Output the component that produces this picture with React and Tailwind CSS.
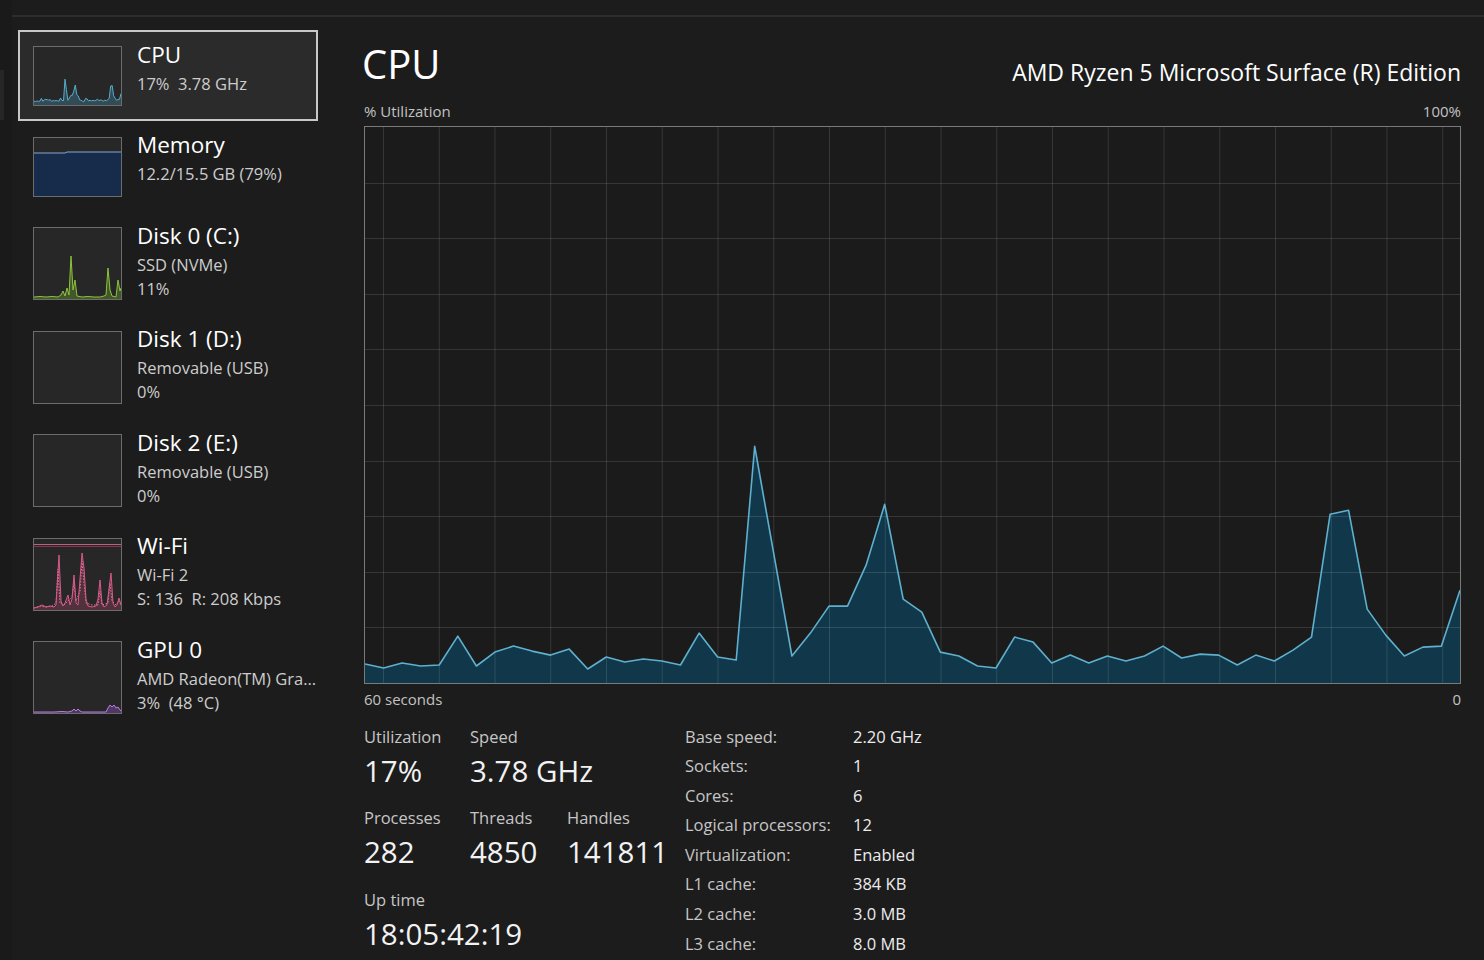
import React from "react";

const Y = [665, 669, 664, 667, 666, 637, 667, 653, 647, 652, 656, 650, 670, 658, 663, 660, 662, 666, 634, 658, 661, 447, 552, 657, 634, 607, 607, 566, 505, 600, 613, 653, 657, 667, 669, 638, 643, 664, 656, 664, 657, 662, 657, 647, 659, 655, 656, 666, 656, 662, 651, 638, 515, 511, 610, 636, 657, 648, 647, 591];
const U = Y.map((y) => Math.max(0, (684 - y) / 557));

function CpuChart() {
  const W = 1095;
  const H = 556;
  const pts = U.map((u, i) => [(i * W) / 59, H - u * H]);
  const line = pts.map((p) => p[0].toFixed(1) + "," + p[1].toFixed(1)).join(" ");
  const area = `0,${H} ${line} ${W},${H}`;
  const vlines = Array.from({ length: 20 }, (_, k) => 18.5 + k * 55.75);
  const hlines = Array.from({ length: 9 }, (_, k) => ((k + 1) * H) / 10);
  return (
    <svg width={W} height={H} className="block">
      <polygon points={area} fill="#10384a" />
      {vlines.map((x, i) => (
        <line key={"v" + i} x1={x} x2={x} y1={0} y2={H} stroke="rgba(255,255,255,0.12)" strokeWidth="1" />
      ))}
      {hlines.map((y, i) => (
        <line key={"h" + i} x1={0} x2={W} y1={Math.round(y) + 0.5} y2={Math.round(y) + 0.5} stroke="rgba(255,255,255,0.12)" strokeWidth="1" />
      ))}
      <polyline points={line} fill="none" stroke="#5fb0cf" strokeWidth="1.6" strokeLinejoin="round" />
    </svg>
  );
}

function Thumb({ tall, children }) {
  return (
    <div className={`shrink-0 w-[89px] ${tall ? "h-[73px]" : "h-[60px]"} border border-[#6c6c6c] bg-[#272727] overflow-hidden`}>
      {children}
    </div>
  );
}

function CpuThumb() {
  const W = 87, H = 58;
  const pts = U.map((u, i) => [(i * W) / 59, H - 2 - u * (H - 2)]);
  const line = pts.map((p) => p[0].toFixed(1) + "," + p[1].toFixed(1)).join(" ");
  return (
    <svg width={W} height={H} className="block">
      <polygon points={`0,${H} ${line} ${W},${H}`} fill="rgba(80,170,205,0.28)" />
      <polyline points={line} fill="none" stroke="#55aecd" strokeWidth="1" />
    </svg>
  );
}

function MemThumb() {
  return (
    <svg width="87" height="58" className="block">
      <polygon points="0,15 31,15 33,14 87,14 87,58 0,58" fill="#172b4b" />
      <polyline points="0,15 31,15 33,14 87,14" fill="none" stroke="#87a7d2" strokeWidth="1" />
    </svg>
  );
}

function DiskThumb() {
  const p = "0,69 6,68.5 12,69 18,68.5 24,69 27,67 29,63 31,68 33,60 35,67 37,28 39,62 41,52 43,68 48,69 54,68.5 60,69 66,69 70,68 72,67 74,40 76,62 78,68 82,69 84,52 86,63 87,60";
  return (
    <svg width="87" height="71" className="block">
      <polygon points={`0,71 ${p} 87,71`} fill="rgba(120,180,50,0.35)" />
      <polyline points={p} fill="none" stroke="#8cc43c" strokeWidth="1" />
    </svg>
  );
}

function WifiThumb() {
  const p = "0,69 4,68 8,66 12,68 16,67 20,68 22,66 25,16 27,62 29,67 31,64 34,56 36,66 38,60 40,36 42,64 44,66 46,40 48,14 50,29 52,60 54,67 58,68 62,67 64,60 66,41 68,64 70,68 73,66 75,50 77,34 79,64 81,68 83,66 85,59 87,66";
  const d = "0,69 6,67 12,68 18,67 22,64 24,30 26,64 30,66 34,62 38,58 40,44 42,62 46,52 48,22 50,44 52,64 58,66 64,66 66,52 68,66 74,64 76,44 78,62 82,66 85,62 87,66";
  return (
    <svg width="87" height="71" className="block">
      <line x1="0" x2="87" y1="5.5" y2="5.5" stroke="#c65a80" strokeWidth="1" />
      <line x1="0" x2="87" y1="7.5" y2="7.5" stroke="#7a3b52" strokeWidth="1" />
      <polygon points={`0,71 ${p} 87,71`} fill="rgba(205,80,125,0.25)" />
      <polyline points={d} fill="none" stroke="#e27aa0" strokeWidth="1" strokeDasharray="1.5 1.5" />
      <polyline points={p} fill="none" stroke="#d85a8a" strokeWidth="1" />
    </svg>
  );
}

function GpuThumb() {
  const p = "0,70 20,70 28,69.5 34,70 38,69 40,67 42,69 44,67 46,69 48,70 60,70 72,70 74,66 76,63 78,65 80,63 82,66 84,65 86,68 87,69";
  return (
    <svg width="87" height="71" className="block">
      <polygon points={`0,71 ${p} 87,71`} fill="rgba(160,90,210,0.35)" />
      <polyline points={p} fill="none" stroke="#b77de6" strokeWidth="1" />
    </svg>
  );
}

function Item({ selected, title, lines, thumb, tall }) {
  return (
    <div
      className={`flex items-start border-2 pl-[13px] pt-[14px] w-[300px] ${tall ? "h-[103.5px]" : "h-[90.5px]"} ${
        selected ? "border-[#c8c8c8] bg-[#2b2b2b]" : "border-transparent"
      }`}
    >
      <Thumb tall={tall}>{thumb}</Thumb>
      <div className="ml-[15px] mt-[-5.5px] min-w-0">
        <div className="text-[22.5px] leading-[28px] text-white whitespace-nowrap">{title}</div>
        <div className="mt-[3px] text-[16.5px] leading-[24px] text-[#cdcdcd]">
          {lines.map((l, i) => (
            <div key={i} className="whitespace-pre">
              {l}
            </div>
          ))}
        </div>
      </div>
    </div>
  );
}

function Stat({ label, value }) {
  return (
    <div>
      <div className="text-[16.5px] leading-[22px] text-[#c6c6c6] whitespace-nowrap">{label}</div>
      <div className="mt-[5px] text-[29.5px] leading-[36px] text-[#f2f2f2] whitespace-nowrap">{value}</div>
    </div>
  );
}

const TABLE = [
  ["Base speed:", "2.20 GHz"],
  ["Sockets:", "1"],
  ["Cores:", "6"],
  ["Logical processors:", "12"],
  ["Virtualization:", "Enabled"],
  ["L1 cache:", "384 KB"],
  ["L2 cache:", "3.0 MB"],
  ["L3 cache:", "8.0 MB"],
];

export default function App() {
  return (
    <div className="flex h-screen w-full overflow-hidden bg-[#1c1c1c] font-['Open_Sans','Noto_Sans',sans-serif]">
      {/* left gutter */}
      <div className="w-[12px] shrink-0 bg-[#1a1a1a] flex flex-col">
        <div className="h-[70px]" />
        <div className="w-[4px] h-[50px] bg-[#262626]" />
      </div>
      <div className="flex-1 flex flex-col min-w-0">
        <div className="h-[17px] shrink-0 border-b-2 border-[#2c2c2c]" />
        <div className="flex flex-1 min-h-0">
          {/* sidebar */}
          <div className="w-[330px] shrink-0 pt-[13px] pl-[6px] flex flex-col bg-[#1c1c1c]">
            <Item selected title="CPU" lines={["17%  3.78 GHz"]} thumb={<CpuThumb />} />
            <Item title="Memory" lines={["12.2/15.5 GB (79%)"]} thumb={<MemThumb />} />
            <Item tall title="Disk 0 (C:)" lines={["SSD (NVMe)", "11%"]} thumb={<DiskThumb />} />
            <Item tall title="Disk 1 (D:)" lines={["Removable (USB)", "0%"]} thumb={null} />
            <Item tall title="Disk 2 (E:)" lines={["Removable (USB)", "0%"]} thumb={null} />
            <Item tall title="Wi-Fi" lines={["Wi-Fi 2", "S: 136  R: 208 Kbps"]} thumb={<WifiThumb />} />
            <Item tall title="GPU 0" lines={["AMD Radeon(TM) Gra...", "3%  (48 °C)"]} thumb={<GpuThumb />} />
          </div>
          {/* main */}
          <div className="flex-1 min-w-0 pl-[22px] pr-[23px] pt-[23px] flex flex-col">
            <div className="flex justify-between items-start h-[48px]">
              <div className="ml-[-2px] text-[40px] leading-[48px] text-white">CPU</div>
              <div className="mt-[16px] text-[23px] leading-[32px] text-white whitespace-nowrap">
                AMD Ryzen 5 Microsoft Surface (R) Edition
              </div>
            </div>
            <div className="mt-[13px] flex justify-between text-[15px] leading-[20px] text-[#c2c2c2]">
              <span>% Utilization</span>
              <span>100%</span>
            </div>
            <div className="mt-[5px] h-[558px] border border-[#7a7a7a] bg-[#1b1b1b]">
              <CpuChart />
            </div>
            <div className="mt-[5px] flex justify-between text-[15px] leading-[20px] text-[#c2c2c2]">
              <span>60 seconds</span>
              <span>0</span>
            </div>
            <div className="mt-[16.5px] flex">
              <div className="w-[321px] shrink-0">
                <div className="grid grid-cols-[106px_1fr]">
                  <Stat label="Utilization" value="17%" />
                  <Stat label="Speed" value="3.78 GHz" />
                </div>
                <div className="mt-[18.5px] grid grid-cols-[106px_97px_1fr]">
                  <Stat label="Processes" value="282" />
                  <Stat label="Threads" value="4850" />
                  <Stat label="Handles" value="141811" />
                </div>
                <div className="mt-[18.5px]">
                  <Stat label="Up time" value="18:05:42:19" />
                </div>
              </div>
              <div className="mt-[-4px] text-[16.5px] leading-[29.6px]">
                {TABLE.map(([k, v]) => (
                  <div key={k} className="flex">
                    <div className="w-[168px] text-[#c6c6c6] whitespace-nowrap">{k}</div>
                    <div className="text-[#ececec] whitespace-nowrap">{v}</div>
                  </div>
                ))}
              </div>
            </div>
          </div>
        </div>
      </div>
    </div>
  );
}
